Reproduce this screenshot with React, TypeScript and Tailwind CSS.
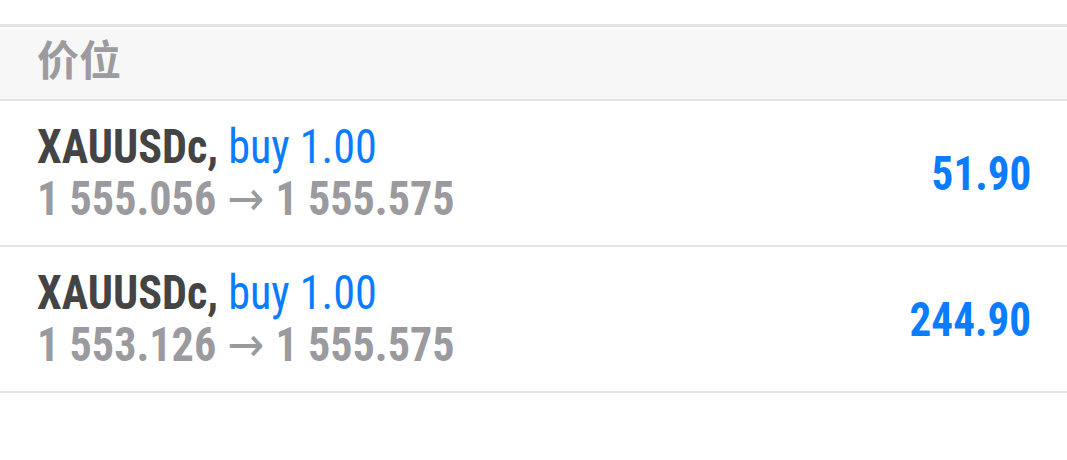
const rows = [
  { sym: "XAUUSDc,", side: "buy 1.00", open: "1 555.056", cur: "1 555.575", profit: "51.90" },
  { sym: "XAUUSDc,", side: "buy 1.00", open: "1 553.126", cur: "1 555.575", profit: "244.90" },
];

export default function App() {
  return (
    <div className="w-[1067px] h-[460px] bg-white pt-[24px]" style={{ fontFamily: "'Roboto Condensed', Roboto, sans-serif" }}>
      <div className="border-t-[3px] border-[#e4e4e4] pt-[2px]">
        <div className="h-[70px] bg-[#f7f7f7] flex items-center pl-[37px] pb-[13px]">
          <span
            className="text-[42px] leading-none font-bold text-[#9b9ba0]"
            style={{ fontFamily: "'Noto Sans CJK SC', 'Noto Sans', sans-serif" }}
          >
            价位
          </span>
        </div>
      </div>
      {rows.map((r, i) => (
        <div key={i} className="border-t-[2px] border-[#e4e4e4] h-[146px] flex items-center justify-between pl-[37px] pr-[36px]">
          <div className="flex flex-col pt-[1px] pb-[2px]">
            <div className="text-[48px] leading-[52px] whitespace-nowrap origin-left scale-x-[0.92]">
              <span className="font-bold text-[#444444]">{r.sym}</span>{" "}
              <span className="text-[#0a7cff]">{r.side}</span>
            </div>
            <div className="text-[48px] leading-[52px] font-bold text-[#9a9a9f] whitespace-nowrap origin-left scale-x-[0.92]">
              {r.open}{" "}
              <span className="font-medium mx-[1px]" style={{ fontFamily: "Roboto, 'DejaVu Sans', sans-serif" }}>→</span>
              {" "}{r.cur}
            </div>
          </div>
          <div className="text-[49px] leading-none font-bold text-[#0a7cff] origin-right scale-x-[0.88]">{r.profit}</div>
        </div>
      ))}
      <div className="border-t-[2px] border-[#e4e4e4]" />
    </div>
  );
}
